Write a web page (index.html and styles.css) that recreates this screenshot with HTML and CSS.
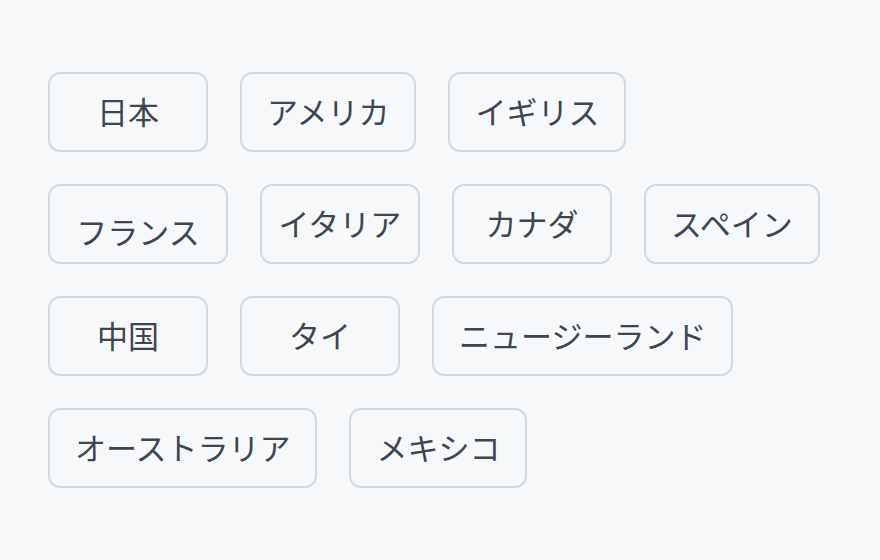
FILE: index.html
```html
<!DOCTYPE html>
<html lang="ja">
<head>
    <meta charset="UTF-8">
    <meta name="viewport" content="width=device-width, initial-scale=1.0">
    <title>国</title>
    <link rel="stylesheet" href="styles.css">
</head>
<body>
    <div class="tags">
        <div class="tag-row">
            <div class="tag">日本</div>
            <div class="tag">アメリカ</div>
            <div class="tag">イギリス</div>
        </div>
        <div class="tag-row">
            <div class="tag tag-low">フランス</div>
            <div class="tag tag-narrow">イタリア</div>
            <div class="tag">カナダ</div>
            <div class="tag">スペイン</div>
        </div>
        <div class="tag-row">
            <div class="tag">中国</div>
            <div class="tag">タイ</div>
            <div class="tag">ニュージーランド</div>
        </div>
        <div class="tag-row">
            <div class="tag">オーストラリア</div>
            <div class="tag">メキシコ</div>
        </div>
    </div>
</body>
</html>
```

FILE: styles.css
```css
body {
    margin: 0;
    background-color: #f7f8fa;
    font-family: "Noto Sans CJK JP", "Noto Sans", sans-serif;
}
.tags {
    display: flex;
    flex-direction: column;
    gap: 32px;
    padding: 72px 48px;
}
.tag-row {
    display: flex;
    gap: 32px;
}
.tag {
    box-sizing: border-box;
    height: 80px;
    min-width: 160px;
    padding: 0 25px 4px;
    display: flex;
    align-items: center;
    justify-content: center;
    border: 2px solid #d3d9e0;
    border-radius: 12px;
    font-size: 31px;
    color: #3d4651;
    white-space: nowrap;
}
.tag-low {
    width: 180px;
    padding: 12px 0 0;
}
.tag-narrow {
    width: 160px;
    padding: 0 0 4px;
}
```
